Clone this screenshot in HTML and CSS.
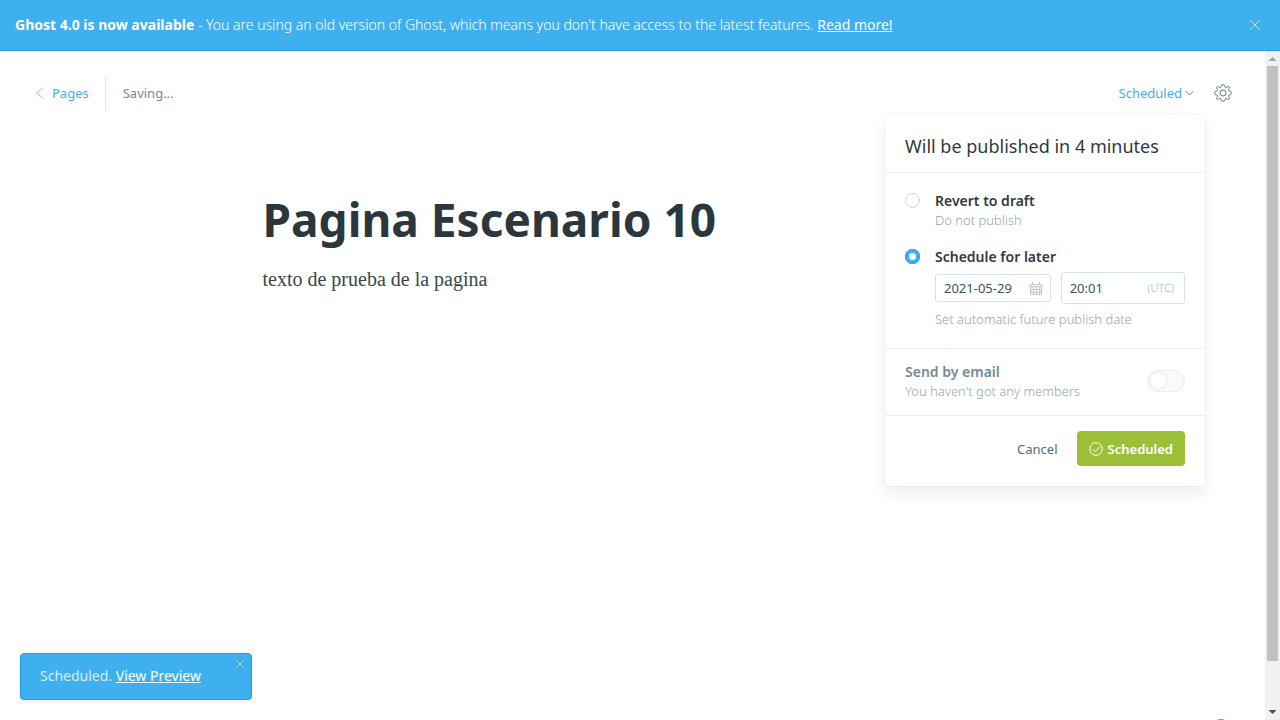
FILE: index.html
```html
<!DOCTYPE html>
<html lang="en">
<head>
<meta charset="utf-8">
<meta name="viewport" content="width=device-width, initial-scale=1">
<title>Ghost Editor</title>
<link rel="stylesheet" href="styles.css">
</head>
<body>
<div class="app">
  <div class="banner">
    <p class="banner-text"><strong>Ghost 4.0 is now available</strong> - You are using an old version of Ghost, which means you don't have access to the latest features. <a href="#">Read more!</a></p>
    <button class="icon-button banner-close" type="button" aria-label="Close">
      <svg width="12" height="12" viewBox="0 0 12 12"><path d="M1 1l10 10M11 1L1 11"/></svg>
    </button>
  </div>
  <div class="viewport">
    <main class="editor">
      <header class="toolbar">
        <a class="back" href="#"><svg width="8" height="12" viewBox="0 0 8 12"><path d="M7.500.5L.7 6l6.800 5.500"/></svg>Pages</a>
        <span class="status">Saving...</span>
        <div class="publish">
          <button class="publish-trigger" type="button">Scheduled<svg width="9" height="6" viewBox="0 0 9 6"><path d="M.5.8l4 4.200 4-4.200"/></svg></button>
          <form class="menu">
            <h2 class="menu-title">Will be published in 4 minutes</h2>
            <div class="menu-options">
              <div class="option">
                <input class="radio" type="radio" name="state" id="draft">
                <div class="option-body">
                  <label class="label" for="draft">Revert to draft</label>
                  <p class="hint">Do not publish</p>
                </div>
              </div>
              <div class="option">
                <input class="radio" type="radio" name="state" id="later" checked>
                <div class="option-body">
                  <label class="label" for="later">Schedule for later</label>
                  <div class="datetime">
                    <div class="field date">
                      <input type="text" value="2021-05-29" aria-label="Publish date">
                      <svg class="calendar" width="12" height="13" viewBox="0 0 12 13"><path d="M.5 2.500h11v10H.5zM.5 4.500h11M.5 7.500h11M.5 10.500h11M3.500 4.500v8M6.500 4.500v8M9.500 4.500v8M2.500 0v3M9.500 0v3"/></svg>
                    </div>
                    <div class="field time">
                      <input type="text" value="20:01" aria-label="Publish time">
                      <small class="zone">(UTC)</small>
                    </div>
                  </div>
                  <p class="hint">Set automatic future publish date</p>
                </div>
              </div>
            </div>
            <div class="menu-email">
              <div class="option-body">
                <label class="label muted" for="email">Send by email</label>
                <p class="hint">You haven't got any members</p>
              </div>
              <input class="switch" type="checkbox" id="email" disabled>
            </div>
            <div class="menu-actions">
              <button class="cancel" type="button">Cancel</button>
              <button class="confirm" type="button"><svg width="14" height="14" viewBox="0 0 14 14"><circle cx="7" cy="7" r="6.300"/><path d="M3.600 7.200l2.500 2.500 4.600-5"/></svg>Scheduled</button>
            </div>
          </form>
        </div>
        <button class="icon-button settings" type="button" aria-label="Settings">
          <svg width="18" height="18" viewBox="0 0 18 18"><circle cx="9" cy="9" r="3"/><path d="M7.300 1.200Q9 .2 10.700 1.200L11.200 3.200Q11.500 3.900 12.300 3.500L14.200 2.500Q15.300 2.700 15.500 3.800L14.500 5.700Q14.100 6.500 14.800 6.800L16.800 7.300Q17.800 9 16.800 10.700L14.800 11.200Q14.100 11.500 14.500 12.300L15.500 14.200Q15.300 15.300 14.200 15.500L12.300 14.500Q11.500 14.100 11.200 14.800L10.700 16.800Q9 17.800 7.300 16.800L6.800 14.800Q6.500 14.100 5.700 14.500L3.800 15.500Q2.700 15.300 2.500 14.200L3.500 12.300Q3.900 11.500 3.200 11.200L1.200 10.700Q.2 9 1.200 7.300L3.200 6.800Q3.900 6.500 3.500 5.700L2.500 3.800Q2.700 2.700 3.800 2.500L5.700 3.500Q6.500 3.900 6.800 3.200Z"/></svg>
        </button>
      </header>
      <article class="post">
        <h1>Pagina Escenario 10</h1>
        <p>texto de prueba de la pagina</p>
      </article>
      <button class="help" type="button" aria-label="Help"></button>
    </main>
    <div class="scrollbar" aria-hidden="true">
      <svg width="15" height="15" viewBox="0 0 15 15"><path fill="#a3a3a3" d="M3.500 10l4-4 4 4z"/></svg>
      <div class="thumb"></div>
      <svg width="15" height="15" viewBox="0 0 15 15"><path fill="#505050" d="M3.500 5l4 4 4-4z"/></svg>
    </div>
  </div>
  <div class="toast" role="status">
    <span>Scheduled. <a href="#">View Preview</a></span>
    <button class="icon-button toast-close" type="button" aria-label="Dismiss"><svg width="8" height="8" viewBox="0 0 8 8"><path d="M.5.5l7 7M7.500.5l-7 7"/></svg></button>
  </div>
</div>
</body>
</html>
```
FILE: styles.css
```css
* { box-sizing: border-box; }
body { margin: 0; color: #303a3e; background: #fff; font: 13px/20px "Noto Sans", "Open Sans", sans-serif; }
h1, h2, p { margin: 0; }
button { padding: 0; border: 0; background: none; font: inherit; color: inherit; }
svg { display: block; flex: none; fill: none; stroke: currentColor; }
.app { position: relative; display: flex; flex-direction: column; height: 100vh; overflow: hidden; }
.banner { display: flex; align-items: center; justify-content: space-between; padding: 15px 19px 15px 15px; border-bottom: 1px solid #1e9de6; background: #3eb0ef; color: #fff; font-size: 14px; }
.banner-text { font-weight: 300; }
.banner strong { font-weight: 700; }
.banner a, .toast a { color: #fff; font-weight: 400; }
.banner-close { color: #c5e7fa; }
.viewport { display: flex; flex: 1; min-height: 0; }
.editor { position: relative; flex: 1; overflow: hidden; }
.toolbar { display: flex; align-items: center; padding: 24px 33px 0 36px; }
.back { display: flex; align-items: center; gap: 8px; height: 36px; padding-right: 16px; border-right: 1px solid #e3ebf1; color: #3eb0ef; text-decoration: none; }
.back svg { color: #8acdf4; }
.status { padding-left: 17px; color: #738a94; }
.publish { position: relative; margin-left: auto; }
.publish-trigger { display: flex; align-items: center; gap: 3px; color: #3eb0ef; }
.publish-trigger svg { color: #738a94; }
.settings { margin-left: 20px; color: #657c87; }
.menu { position: absolute; top: 32px; right: -11px; width: 320px; border-radius: 4px; background: #fff; box-shadow: 0 0 0 1px rgba(99, 114, 130, .06), 0 8px 16px rgba(27, 39, 51, .08); }
.menu-title { padding: 19px 20px 14px; border-bottom: 1px solid #e5eff5; font-size: 18px; line-height: 24px; font-weight: 400; }
.menu-options { display: grid; gap: 18px; padding: 18px 20px 20px; border-bottom: 1px solid #e5eff5; }
.option { display: flex; gap: 15px; }
.option-body { flex: 1; }
.label { display: block; font-size: 14px; font-weight: 600; }
.muted { color: #738a94; }
.hint { color: #95a6ae; font-weight: 300; line-height: 18px; }
.radio { appearance: none; flex: none; width: 15px; height: 15px; margin: 2px 0 0; border: 1px solid #c5d9e8; border-radius: 50%; background: #fff; }
.radio:checked { border: 4px solid #3eb0ef; outline: 1px solid #1e9de6; outline-offset: -1px; }
.datetime { display: flex; align-items: center; gap: 10px; margin: 5px 0 6px; }
.field { display: flex; align-items: center; border: 1px solid #d3e2ea; border-radius: 3px; padding: 0 8px; }
.date { flex: 116 1 0; height: 28px; }
.time { flex: 124 1 0; height: 32px; padding-right: 10px; }
.field input { flex: 1; width: 0; min-width: 0; padding: 0; border: 0; outline: 0; background: none; font: inherit; color: #425058; }
.calendar { color: #c2c8cb; }
.zone { color: #a7b4bb; font-size: 11px; font-weight: 300; }
.menu-email { display: flex; align-items: center; padding: 13px 20px 15px; border-bottom: 1px solid #e5eff5; }
.switch { appearance: none; width: 38px; height: 22px; margin: 0; border: 1px solid #e7eff4; border-radius: 11px; background: #f8fafb; }
.switch::before { content: ""; display: block; width: 16px; height: 16px; margin: 2px; border-radius: 50%; background: #fff; box-shadow: 0 0 2px #c3ccd2; }
.menu-actions { display: flex; justify-content: flex-end; align-items: center; gap: 19px; padding: 15px 20px 20px; }
.cancel { color: #566b75; }
.confirm { display: flex; align-items: center; gap: 5px; height: 35px; padding: 0 12px; border-radius: 4px; background: #9bbf36; color: #fff; font-weight: 600; }
.post { max-width: 740px; margin: 0 auto; padding-top: 76px; }
.post h1 { color: #2b373d; font-size: 46px; line-height: 64px; font-weight: 700; }
.post p { padding-top: 13px; color: #3a464c; font: 20px/30px "Liberation Serif", serif; }
.help { position: absolute; right: 35px; bottom: -17px; width: 18px; height: 18px; border: 1px solid #738a94; border-radius: 50%; }
.scrollbar { display: flex; flex-direction: column; width: 15px; background: #f1f1f1; }
.scrollbar svg { stroke: none; }
.thumb { flex: none; height: 89%; margin: 0 2px auto; background: #c1c1c1; }
.toast { position: absolute; left: 20px; bottom: 20px; display: flex; justify-content: space-between; width: 232px; padding: 12px 7px 13px 19px; border: 1px solid #1e9de6; border-radius: 4px; background: #3eb0ef; color: #d5eefb; font-size: 14px; box-shadow: 0 1px 6px rgba(0, 0, 0, .08); }
.toast-close { align-self: flex-start; margin-top: -6px; color: #b4dff8; }
```
